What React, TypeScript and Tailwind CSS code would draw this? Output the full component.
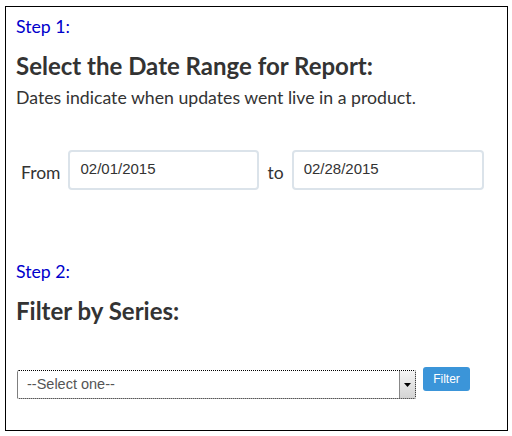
export default function App() {
  return (
    <div className="w-[512px] h-[436px] bg-white pt-[6px] pl-[5px]" style={{ fontFamily: "Lato, 'Noto Sans', sans-serif" }}>
      <div className="w-[503px] h-[425px] border border-black px-[10px] flex flex-col">
        <div className="mt-[9px] text-[17.7px] leading-[22px] text-[#0000cc]">Step 1:</div>
        <div className="mt-[13px] text-[24px] leading-[29px] font-bold text-[#333]">Select the Date Range for Report:</div>
        <div className="mt-[7px] text-[17.7px] leading-[22px] text-[#333]">Dates indicate when updates went live in a product.</div>
        <div className="mt-[41px] flex items-center">
          <span className="ml-[5px] text-[17.5px] text-[#333] mt-[6px]">From</span>
          <div className="ml-[8px] w-[191px] h-[40px] border-2 border-[#dbe3ea] rounded-[4px] pl-[10px] pt-[8px] text-[15px] leading-[18px] text-[#333]" style={{ fontFamily: "'Liberation Sans', Arial, sans-serif" }}>02/01/2015</div>
          <span className="ml-[8px] text-[17.5px] text-[#333] mt-[6px]">to</span>
          <div className="ml-[8px] w-[192px] h-[40px] border-2 border-[#dbe3ea] rounded-[4px] pl-[10px] pt-[8px] text-[15px] leading-[18px] text-[#333]" style={{ fontFamily: "'Liberation Sans', Arial, sans-serif" }}>02/28/2015</div>
        </div>
        <div className="mt-[71px] text-[17.7px] leading-[22px] text-[#0000cc]">Step 2:</div>
        <div className="mt-[13px] text-[24px] leading-[29px] font-bold text-[#333]">Filter by Series:</div>
        <div className="mt-[42px] flex items-start">
          <div className="mt-[3px] ml-[1px] w-[399px] h-[29px] border border-dotted border-black rounded-[2px] flex items-stretch" style={{ fontFamily: "'Liberation Sans', Arial, sans-serif" }}>
            <div className="flex-1 pl-[9px] flex items-center text-[14.5px] text-[#555]">--Select one--</div>
            <div className="w-[16px] border-l border-[#888] bg-gradient-to-b from-[#f4f4f4] to-[#d4d4d4] flex items-center justify-center">
              <svg width="7" height="4" viewBox="0 0 7 4"><polygon points="0,0 7,0 3.5,4" fill="#000" /></svg>
            </div>
          </div>
          <div className="ml-[7px] w-[47px] h-[24px] bg-[#3b95d9] rounded-[3px] text-white text-[12px] flex items-center justify-center" style={{ fontFamily: "'Liberation Sans', Arial, sans-serif" }}>Filter</div>
        </div>
      </div>
    </div>
  );
}
